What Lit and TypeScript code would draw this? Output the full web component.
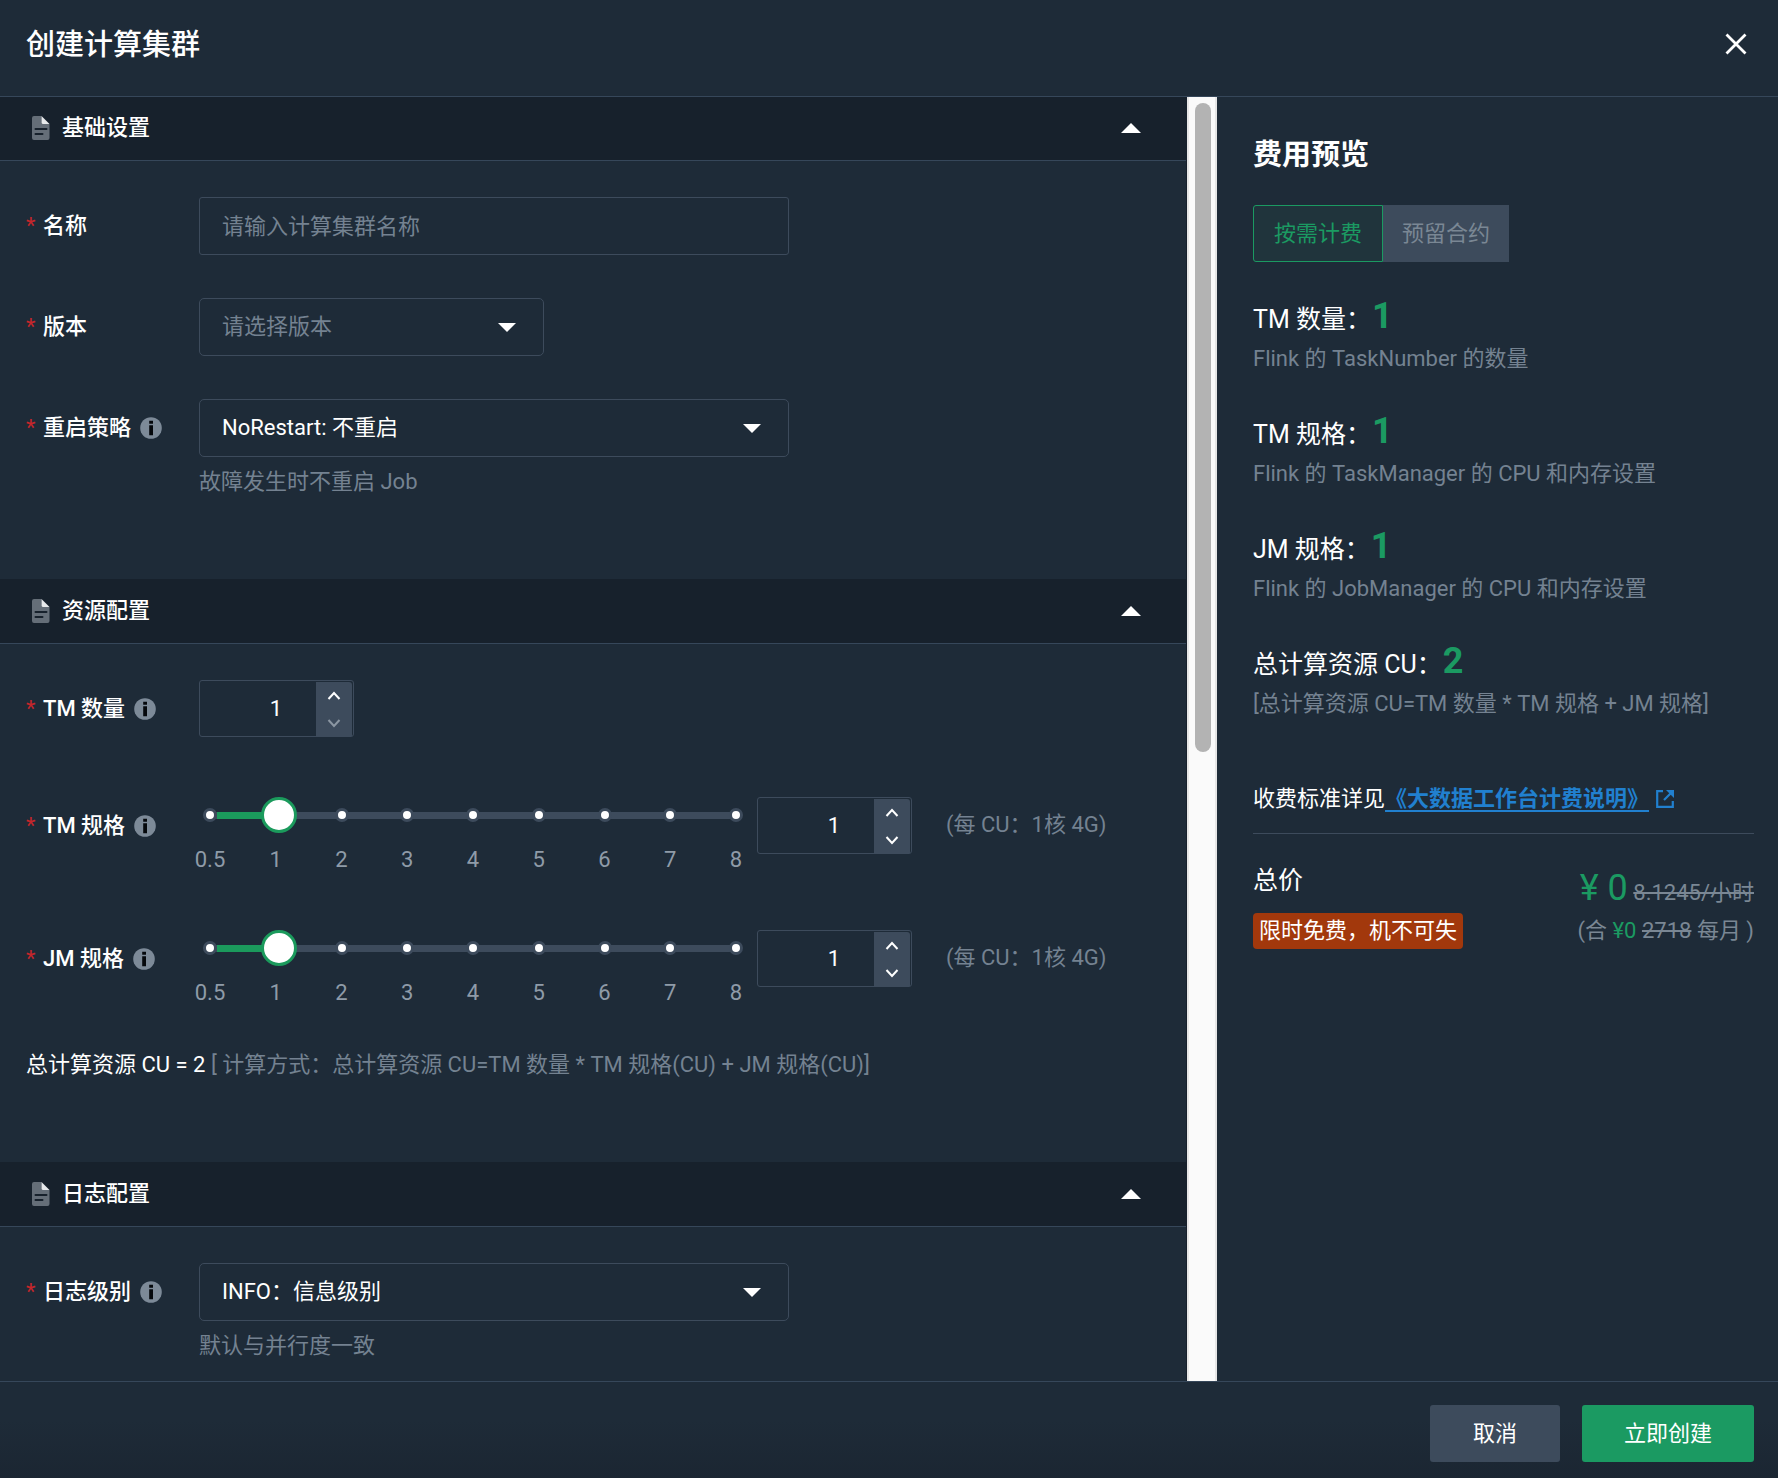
import { LitElement, html, css, svg, nothing } from "lit";
import { customElement, property, state } from "lit/decorators.js";
import { classMap } from "lit/directives/class-map.js";

const MARKS = [0.5, 1, 2, 3, 4, 5, 6, 7, 8];

const base = css`
  *,
  *::before,
  *::after {
    box-sizing: border-box;
  }
  button,
  input,
  select {
    margin: 0;
    font: inherit;
    color: inherit;
  }
  button {
    padding: 0;
    border: 0;
    background: none;
    cursor: pointer;
  }
  svg {
    display: block;
  }
`;

const infoIcon = html`<svg width="22" height="22" viewBox="0 0 22 22" aria-hidden="true">
  ${svg`<circle cx="11" cy="11" r="10.8" fill="#7d8a98"/>
  <path d="M9.2 3.800h3.800v3H9.2zM9.2 8.300h3.800v10H9.2z" fill="#05080c"/>`}
</svg>`;

const docIcon = html`<svg width="18" height="24" viewBox="0 0 18 24" aria-hidden="true">
  ${svg`<path d="M2 0h7.500v6.500q0 1.500 1.500 1.500h6.500v14a2 2 0 0 1-2 2H2a2 2 0 0 1-2-2V2a2 2 0 0 1 2-2z" fill="#656e78"/>
  <path d="M9.500 0L17.500 8H11q-1.500 0-1.500-1.500z" fill="#e8eaec"/>
  <path d="M3.500 13h11M3.500 18h7" stroke="#17212c" stroke-width="2" stroke-linecap="round"/>`}
</svg>`;

@customElement("number-box")
export class NumberBox extends LitElement {
  @property() label = "";
  @property({ type: Number }) value = 1;
  @property({ type: Number }) min = 0.5;

  static styles = [
    base,
    css`
      :host {
        display: block;
        flex: none;
      }
      .box {
        display: flex;
        width: 155px;
        height: 57px;
        border: 1px solid #3d4b5c;
        border-radius: 3px;
      }
      .field {
        flex: 1;
        min-width: 0;
        padding: 0 0 0 36px;
        border: 0;
        background: none;
        color: #fff;
        text-align: center;
        outline: none;
      }
      .steps {
        display: flex;
        flex-direction: column;
        width: 36px;
        margin: 1px 1px 0 0;
        border-radius: 0 3px 0 0;
        background: #3d4b5c;
      }
      .step {
        flex: 1;
        display: grid;
        place-items: center;
        color: #fff;
      }
      .step:disabled {
        color: #8b96a2;
      }
    `,
  ];

  private step(by: number) {
    this.value = Math.max(this.min, this.value + by);
    this.dispatchEvent(new CustomEvent("value-change", { detail: this.value }));
  }

  render() {
    return html`<div class="box">
      <input class="field" type="text" inputmode="decimal" aria-label=${this.label} .value=${String(this.value)} />
      <div class="steps">
        <button class="step" aria-label="增加" @click=${() => this.step(1)}>
          <svg width="14" height="10" viewBox="0 0 14 10">
            <path d="M1.500 8L7 2l5.500 6" fill="none" stroke="currentColor" stroke-width="2" />
          </svg>
        </button>
        <button class="step" aria-label="减少" ?disabled=${this.value <= this.min} @click=${() => this.step(-1)}>
          <svg width="14" height="10" viewBox="0 0 14 10">
            <path d="M1.500 2L7 8l5.500-6" fill="none" stroke="currentColor" stroke-width="2" />
          </svg>
        </button>
      </div>
    </div>`;
  }
}

@customElement("mark-slider")
export class MarkSlider extends LitElement {
  @property() label = "";
  @property({ type: Number }) value = 1;

  static styles = [
    base,
    css`
      :host {
        display: block;
        flex: none;
        width: 540px;
      }
      .rail {
        position: relative;
        display: flex;
        align-items: center;
        justify-content: space-between;
        height: 36px;
      }
      .rail::before {
        content: "";
        position: absolute;
        inset: 15px 7px 14px;
        background: #3d4b5c;
      }
      .fill {
        position: absolute;
        left: 14px;
        top: 15px;
        height: 7px;
        background: #1b9a5c;
      }
      .dot {
        position: relative;
        width: 14px;
        height: 14px;
        border: 3px solid #3d4b5c;
        border-radius: 50%;
        background: #fff;
      }
      .range {
        position: absolute;
        left: -7px;
        top: 0;
        width: calc(100% + 14px);
        height: 36px;
        appearance: none;
        background: none;
        outline: none;
      }
      .range::-webkit-slider-thumb {
        appearance: none;
        width: 36px;
        height: 36px;
        border: 3px solid #1b9a5c;
        border-radius: 50%;
        background: #fff;
      }
      .marks {
        display: flex;
        justify-content: space-between;
        margin-top: 11px;
        color: #8f9ba8;
        line-height: 32px;
      }
      .mark {
        display: flex;
        justify-content: center;
        width: 14px;
      }
    `,
  ];

  private pick(e: Event) {
    const v = MARKS[Number((e.target as HTMLInputElement).value)];
    this.dispatchEvent(new CustomEvent("value-change", { detail: v }));
  }

  render() {
    const index = Math.max(0, MARKS.indexOf(this.value));
    return html`
      <div class="rail">
        <div class="fill" style="width: ${(index / (MARKS.length - 1)) * 96}%"></div>
        ${MARKS.map(() => html`<span class="dot"></span>`)}
        <input class="range" type="range" min="0" max="8" step="1" aria-label=${this.label} .value=${String(index)} @input=${this.pick} />
      </div>
      <div class="marks">${MARKS.map((m) => html`<span class="mark">${m}</span>`)}</div>
    `;
  }
}

@customElement("form-section")
export class FormSection extends LitElement {
  @property() heading = "";
  @state() private open = true;

  static styles = [
    base,
    css`
      :host {
        display: block;
      }
      .bar {
        display: flex;
        align-items: center;
        gap: 12px;
        width: 100%;
        height: 65px;
        padding: 0 45px 0 32px;
        border-bottom: 1px solid #36475a;
        background: #17212c;
        color: #fff;
        font-weight: 500;
        text-align: left;
      }
      .title {
        flex: 1;
      }
      .caret.closed {
        transform: rotate(180deg);
      }
      .body {
        display: flex;
        flex-direction: column;
        padding: 36px 26px 0;
      }
    `,
  ];

  render() {
    return html`
      <button class="bar" aria-expanded=${this.open} @click=${() => (this.open = !this.open)}>
        ${docIcon}
        <span class="title">${this.heading}</span>
        <svg class=${classMap({ caret: true, closed: !this.open })} width="20" height="10" viewBox="0 0 20 10">
          <path d="M0 10L10 0l10 10z" fill="#fff" />
        </svg>
      </button>
      ${this.open ? html`<div class="body"><slot></slot></div>` : nothing}
    `;
  }
}

@customElement("app-root")
export class AppRoot extends LitElement {
  @state() private billing = 0;
  @state() private count = 1;
  @state() private tm = 1;
  @state() private jm = 1;

  static styles = [
    base,
    css`
      :host {
        display: flex;
        flex-direction: column;
        height: 100vh;
        overflow: hidden;
        background: #1e2b38;
        color: #fff;
        font: 22px/32px Roboto, "Noto Sans CJK SC", sans-serif;
      }
      .head {
        display: flex;
        justify-content: space-between;
        flex: none;
        height: 97px;
        padding: 25px 30px 0 26px;
        border-bottom: 1px solid #36475a;
      }
      .head-title,
      .fee-title {
        margin: 0;
        font-size: 29px;
        line-height: 40px;
        font-weight: 500;
      }
      .fee-title {
        font-weight: 700;
      }
      .close {
        display: grid;
        place-items: center;
        width: 24px;
        height: 38px;
      }
      .main {
        flex: 1;
        display: flex;
        min-height: 0;
      }
      .form {
        flex: 1;
        min-width: 0;
        overflow: hidden;
        border-right: 1px solid #17202c;
      }
      .scroll {
        flex: none;
        width: 30px;
        padding: 6px;
        border: solid #e6e6e6;
        border-width: 0 2px;
        background: #fafafa;
      }
      .thumb {
        width: 16px;
        height: 51%;
        border-radius: 8px;
        background: #b3b3b3;
      }
      .sections {
        display: flex;
        flex-direction: column;
        margin-top: -1px;
      }
      .row {
        display: flex;
        align-items: flex-start;
      }
      .label {
        display: flex;
        align-items: center;
        flex: none;
        width: 173px;
        height: 58px;
        font-weight: 500;
      }
      .label::before {
        content: "*";
        width: 17px;
        color: #c4262b;
        font-weight: 400;
      }
      .label svg {
        margin-left: 9px;
      }
      .control {
        display: flex;
        flex-direction: column;
        gap: 9px;
        color: #748291;
      }
      .text,
      .select {
        width: 590px;
        height: 58px;
        padding: 0 22px;
        border: 1px solid #3d4b5c;
        border-radius: 3px;
        background: none;
        color: #fff;
        outline: none;
      }
      .text::placeholder {
        color: #748291;
        opacity: 1;
      }
      .select {
        appearance: none;
        border-radius: 5px;
      }
      .picker {
        display: grid;
        align-items: center;
      }
      .picker > * {
        grid-area: 1 / 1;
      }
      .picker svg {
        justify-self: end;
        margin-right: 28px;
        pointer-events: none;
      }
      .select.short {
        width: 345px;
      }
      .select.empty {
        color: #748291;
      }
      .basic {
        display: flex;
        flex-direction: column;
        gap: 43px;
        padding-bottom: 81px;
      }
      .resource {
        display: flex;
        flex-direction: column;
        padding-bottom: 81px;
      }
      .spec {
        padding-top: 59px;
      }
      .spec + .spec {
        padding-top: 54px;
      }
      .slider {
        margin: 0 14px 0 4px;
      }
      .unit {
        margin-left: 34px;
        color: #748291;
        line-height: 56px;
      }
      .total {
        margin: 40px 0 0;
      }
      .muted {
        color: #748291;
      }
      .fee {
        flex: none;
        width: 561px;
        padding: 38px 24px 0 36px;
      }
      .tabs {
        display: flex;
        margin: 30px 0 33px;
      }
      .tab {
        height: 57px;
        padding: 0 19px;
        background: #3d4b5c;
        color: #7a8794;
      }
      .tab.on {
        padding: 0 20px;
        border: 1px solid #1b9a62;
        border-radius: 3px 0 0 3px;
        background: #20343c;
        color: #1b9a62;
      }
      .item {
        height: 115px;
        font-size: 25px;
        line-height: 43px;
      }
      .item strong {
        margin-left: 1px;
        color: #1b9a62;
        font-size: 36px;
      }
      .item small {
        display: block;
        color: #748291;
        font-size: 22px;
        line-height: 36px;
      }
      .rule {
        display: flex;
        align-items: center;
        height: 79px;
        padding: 14px 0 4px;
        border-bottom: 1px solid #3d4b5c;
      }
      .doc {
        display: flex;
        align-items: center;
        gap: 7px;
        color: #2180cf;
        font-weight: 700;
        text-decoration: underline;
        text-decoration-thickness: 2px;
        text-underline-offset: 4px;
      }
      .price {
        display: flex;
        justify-content: space-between;
        align-items: flex-start;
        padding-top: 27px;
      }
      .price-name {
        font-size: 25px;
        line-height: 40px;
      }
      .badge {
        margin-top: 12px;
        padding: 0 6px;
        border-radius: 4px;
        background: #a2380c;
        line-height: 36px;
      }
      .sum {
        color: #7a8794;
        text-align: right;
      }
      .now {
        height: 54px;
        line-height: 54px;
      }
      .now b {
        color: #1b9a62;
        font-size: 36px;
        font-weight: 400;
      }
      .zero {
        color: #1b9a62;
      }
      .foot {
        display: flex;
        justify-content: flex-end;
        align-items: flex-start;
        gap: 22px;
        flex: none;
        height: 97px;
        padding: 23px 24px 0;
        border-top: 1px solid #36475a;
        background: linear-gradient(#1e2b38 40%, #1b2632);
      }
      .btn {
        min-width: 130px;
        height: 57px;
        padding: 0 42px;
        border-radius: 3px;
        background: #3d4b5c;
      }
      .btn.primary {
        background: #1b9a62;
      }
    `,
  ];

  private caret() {
    return html`<svg width="18" height="9" viewBox="0 0 18 9" aria-hidden="true"><path d="M0 0h18L9 9z" fill="#fff" /></svg>`;
  }

  private spec(label: string, value: number, set: (v: number) => void) {
    const on = (e: CustomEvent<number>) => set(e.detail);
    return html`<div class="row spec">
      <div class="label">${label}${infoIcon}</div>
      <mark-slider class="slider" label=${label} .value=${value} @value-change=${on}></mark-slider>
      <number-box label=${label} .value=${value} @value-change=${on}></number-box>
      <span class="unit">(每 CU：1核 4G)</span>
    </div>`;
  }

  render() {
    const cu = this.count * this.tm + this.jm;
    const fees = [
      ["TM 数量：", this.count, "Flink 的 TaskNumber 的数量"],
      ["TM 规格：", this.tm, "Flink 的 TaskManager 的 CPU 和内存设置"],
      ["JM 规格：", this.jm, "Flink 的 JobManager 的 CPU 和内存设置"],
      ["总计算资源 CU：", cu, "[总计算资源 CU=TM 数量 * TM 规格 + JM 规格]"],
    ];
    return html`
      <header class="head">
        <h1 class="head-title">创建计算集群</h1>
        <button class="close" aria-label="关闭">
          <svg width="22" height="22" viewBox="0 0 22 22"><path d="M1.500 1.500l19 19M20.500 1.500l-19 19" stroke="#fff" stroke-width="2.800" /></svg>
        </button>
      </header>
      <main class="main">
        <div class="form">
          <div class="sections">
            <form-section heading="基础设置">
              <div class="basic">
                <div class="row">
                  <label class="label" for="name">名称</label>
                  <input class="text" id="name" type="text" placeholder="请输入计算集群名称" />
                </div>
                <div class="row">
                  <label class="label" for="version">版本</label>
                  <div class="picker">
                    <select class="select short empty" id="version"><option>请选择版本</option></select>
                    ${this.caret()}
                  </div>
                </div>
                <div class="row">
                  <label class="label" for="restart">重启策略${infoIcon}</label>
                  <div class="control">
                    <div class="picker">
                      <select class="select" id="restart"><option>NoRestart: 不重启</option></select>
                      ${this.caret()}
                    </div>
                    <span>故障发生时不重启 Job</span>
                  </div>
                </div>
              </div>
            </form-section>
            <form-section heading="资源配置">
              <div class="resource">
                <div class="row">
                  <div class="label">TM 数量${infoIcon}</div>
                  <number-box
                    label="TM 数量"
                    min="1"
                    .value=${this.count}
                    @value-change=${(e: CustomEvent<number>) => (this.count = e.detail)}
                  ></number-box>
                </div>
                ${this.spec("TM 规格", this.tm, (v) => (this.tm = v))}
                ${this.spec("JM 规格", this.jm, (v) => (this.jm = v))}
                <p class="total">
                  总计算资源 CU = ${cu} <span class="muted">[ 计算方式：总计算资源 CU=TM 数量 * TM 规格(CU) + JM 规格(CU)]</span>
                </p>
              </div>
            </form-section>
            <form-section heading="日志配置">
              <div class="row">
                <label class="label" for="level">日志级别${infoIcon}</label>
                <div class="control">
                  <div class="picker">
                    <select class="select" id="level"><option>INFO：信息级别</option></select>
                    ${this.caret()}
                  </div>
                  <span>默认与并行度一致</span>
                </div>
              </div>
            </form-section>
          </div>
        </div>
        <div class="scroll"><div class="thumb"></div></div>
        <aside class="fee">
          <h2 class="fee-title">费用预览</h2>
          <div class="tabs">
            ${["按需计费", "预留合约"].map(
              (t, i) => html`<button class=${classMap({ tab: true, on: i === this.billing })} @click=${() => (this.billing = i)}>${t}</button>`,
            )}
          </div>
          ${fees.map(([name, value, note]) => html`<div class="item">${name}<strong>${value}</strong><small>${note}</small></div>`)}
          <div class="rule">
            收费标准详见<a class="doc" href="#">《大数据工作台计费说明》<svg width="18" height="18" viewBox="0 0 18 18" aria-hidden="true">
                <path d="M7 1.200H1.200v15.600h15.600V11M15 3L8 10" fill="none" stroke="currentColor" stroke-width="2.200" />
                <path d="M10 0h8v8z" fill="currentColor" />
              </svg></a>
          </div>
          <div class="price">
            <div>
              <div class="price-name">总价</div>
              <div class="badge">限时免费，机不可失</div>
            </div>
            <div class="sum">
              <div class="now"><b>¥ 0</b> <s>8.1245/小时</s></div>
              <div>(合 <span class="zero">¥0</span> <s>2718</s> 每月 )</div>
            </div>
          </div>
        </aside>
      </main>
      <footer class="foot">
        <button class="btn">取消</button>
        <button class="btn primary">立即创建</button>
      </footer>
    `;
  }
}
